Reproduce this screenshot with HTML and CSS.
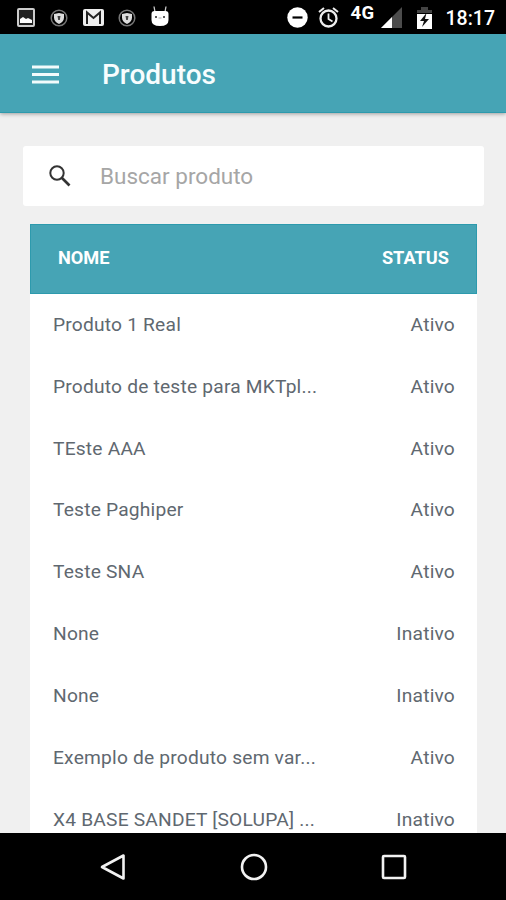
FILE: index.html
```
<!DOCTYPE html>
<html lang="pt-BR">
<head>
    <meta charset="UTF-8">
    <meta name="viewport" content="width=device-width, initial-scale=1.0">
    <title>Produtos</title>
    <link rel="stylesheet" href="styles.css">
</head>
<body>
    <div class="screen">
        <div class="status-bar">
            <div class="notifications">
                <svg width="18" height="19" viewBox="0 0 18 19">
                    <rect x="1" y="1" width="16" height="17" rx="1" fill="#222" stroke="#ccc" stroke-width="2"/>
                    <path d="M3 15v-4l3-2 3 2 2-1 2 1 2 1v3z" fill="#fff"/>
                </svg>
                <svg width="18" height="18" viewBox="0 0 18 18">
                    <circle cx="9" cy="9" r="7.8" fill="none" stroke="#777" stroke-width="1.5"/>
                    <path d="M9 4l5 1v3.500q0 4-5 6.500q-5-2.500-5-6.500V5z" fill="#ddd"/>
                    <path d="M7.500 7h3L9.800 11H8.200z" fill="#444"/>
                </svg>
                <svg width="21" height="17" viewBox="0 0 21 17">
                    <rect width="21" height="17" rx="2" fill="#eee"/>
                    <path d="M4 15V3.500l6.500 5.500L17 3.500V15" fill="none" stroke="#222" stroke-width="2"/>
                </svg>
                <svg width="18" height="18" viewBox="0 0 18 18">
                    <circle cx="9" cy="9" r="7.8" fill="none" stroke="#777" stroke-width="1.5"/>
                    <path d="M9 4l5 1v3.500q0 4-5 6.500q-5-2.500-5-6.500V5z" fill="#ddd"/>
                    <path d="M7.500 7h3L9.800 11H8.200z" fill="#444"/>
                </svg>
                <svg class="android" width="18" height="21" viewBox="0 0 18 21">
                    <path d="M4 6L3 .5M14 6l1-5.500" stroke="#ccc" stroke-width="1.300"/>
                    <path d="M.5 8q0-3 3-3h11q3 0 3 3v6q0 6-8.500 6t-8.500-6z" fill="#fff"/>
                    <circle cx="5" cy="11" r="1" fill="#222"/>
                    <circle cx="13" cy="11" r="1" fill="#222"/>
                    <path d="M7.500 12h3" stroke="#aaa"/>
                </svg>
            </div>
            <div class="system">
                <svg class="dnd" width="21" height="21" viewBox="0 0 21 21">
                    <circle cx="10.500" cy="10.500" r="10.200" fill="#fff"/>
                    <path d="M5.500 10.500h10" stroke="#000" stroke-width="2.200"/>
                </svg>
                <svg class="alarm" width="21" height="21" viewBox="0 0 21 21">
                    <circle cx="10.500" cy="11.500" r="8" fill="none" stroke="#eee" stroke-width="2.300"/>
                    <path d="M1 5l5-4M20 5l-5-4" stroke="#eee" stroke-width="2"/>
                    <path d="M10.500 6.500v5.500l4 2.500" fill="none" stroke="#eee" stroke-width="1.800"/>
                </svg>
                <span class="network">4G</span>
                <svg class="signal" width="21" height="21" viewBox="0 0 21 21">
                    <path d="M0 21L21 0v21z" fill="#4c4c4c"/>
                    <path d="M0 21L11 10v11z" fill="#fff"/>
                </svg>
                <svg class="battery" width="15" height="22" viewBox="0 0 15 22">
                    <path d="M0 6V3h4V0h7v3h4v3z" fill="#444"/>
                    <path d="M0 7h15v15H0z" fill="#fff"/>
                    <path d="M9.500 6L3 14h4l-2 6 7-8H8z" fill="#111"/>
                </svg>
                <span class="clock">18:17</span>
            </div>
        </div>

        <header class="toolbar">
            <svg class="menu-icon" width="27" height="19" viewBox="0 0 27 19">
                <path d="M0 2h27M0 9.500h27M0 17h27" stroke="#f2fbfc" stroke-width="3.200"/>
            </svg>
            <h1>Produtos</h1>
        </header>

        <main class="content">
            <div class="search">
                <svg width="22" height="22" viewBox="0 0 22 22">
                    <circle cx="8" cy="8" r="6.700" fill="none" stroke="#333" stroke-width="2"/>
                    <path d="M12.500 12.500l8 8" stroke="#333" stroke-width="2.700"/>
                </svg>
                <input type="text" placeholder="Buscar produto">
            </div>

            <div class="products">
                <div class="products-head"><span>NOME</span><span>STATUS</span></div>
                <div class="row"><span>Produto 1 Real</span><span>Ativo</span></div>
                <div class="row"><span>Produto de teste para MKTpl...</span><span>Ativo</span></div>
                <div class="row"><span>TEste AAA</span><span>Ativo</span></div>
                <div class="row"><span>Teste Paghiper</span><span>Ativo</span></div>
                <div class="row"><span>Teste SNA</span><span>Ativo</span></div>
                <div class="row"><span>None</span><span>Inativo</span></div>
                <div class="row"><span>None</span><span>Inativo</span></div>
                <div class="row"><span>Exemplo de produto sem var...</span><span>Ativo</span></div>
                <div class="row"><span>X4 BASE SANDET [SOLUPA] ...</span><span>Inativo</span></div>
            </div>
        </main>

        <nav class="nav-bar">
            <svg width="28" height="28" viewBox="0 0 28 28">
                <path d="M24.500 2.500v23L3 14z"/>
            </svg>
            <svg width="28" height="28" viewBox="0 0 28 28">
                <circle cx="14" cy="14" r="12"/>
            </svg>
            <svg width="28" height="28" viewBox="0 0 28 28">
                <rect x="3" y="3" width="22" height="22" rx="1"/>
            </svg>
        </nav>
    </div>
</body>
</html>
```

FILE: styles.css
```
* {
    box-sizing: border-box;
}
body {
    font-family: Roboto, sans-serif;
    margin: 0;
    background-color: #f0f0f0;
}
.screen {
    display: flex;
    flex-direction: column;
    height: 900px;
    overflow: hidden;
}
.status-bar {
    display: flex;
    justify-content: space-between;
    flex: none;
    height: 34px;
    padding: 0 11px 0 17px;
    background: #000;
    color: #fff;
}
.notifications, .system {
    display: flex;
    align-items: center;
    padding-top: 1px;
}
.notifications {
    gap: 15px;
}
.notifications svg:nth-child(4) {
    margin-left: -1px;
}
.notifications .android {
    margin-top: -2px;
}
.alarm {
    margin-left: 10px;
}
.network {
    align-self: flex-start;
    margin: 2px 0 0 11px;
    font-size: 18.5px;
    font-weight: 700;
    line-height: 20px;
    letter-spacing: 0.4px;
}
.signal {
    margin-left: 6px;
}
.battery {
    margin-left: 15px;
}
.clock {
    margin: 2px 0 0 14px;
    font-size: 19.5px;
    font-weight: 500;
}
.toolbar {
    display: flex;
    align-items: center;
    flex: none;
    height: 79px;
    padding: 2px 0 0 32px;
    background: #46a4b5;
    border-bottom: 1px solid #2d9aad;
    box-shadow: 0 1px 4px rgba(0, 0, 0, 0.35);
}
.toolbar h1 {
    margin: 0 0 0 43px;
    color: #f7fdfe;
    font-size: 28px;
    font-weight: 500;
}
.content {
    flex: 1;
    min-height: 0;
    padding: 33px 22px 0 23px;
    overflow: hidden;
}
.search {
    display: flex;
    align-items: center;
    height: 60px;
    padding-left: 26px;
    background: #fff;
    border-radius: 3px;
}
.search input {
    width: 300px;
    margin-left: 29px;
    padding: 0 0 1px;
    border: none;
    outline: none;
    font-family: inherit;
    font-size: 22.5px;
}
.search input::placeholder {
    color: #a6a6a6;
}
.products {
    margin: 18px 7px 0;
    background: #fff;
}
.products-head {
    display: flex;
    justify-content: space-between;
    align-items: center;
    height: 70px;
    padding: 0 27px 4px;
    background: #46a4b5;
    border: 1px solid #2d9aad;
    color: #fff;
    font-size: 18.2px;
    font-weight: 700;
}
.row {
    display: flex;
    justify-content: space-between;
    align-items: center;
    height: 61.85px;
    padding: 0 22px 1px 23px;
    color: #606870;
    font-size: 19.2px;
    letter-spacing: 0.2px;
}
.nav-bar {
    display: flex;
    justify-content: center;
    align-items: center;
    gap: 112.5px;
    flex: none;
    height: 67px;
    padding-left: 1px;
    background: #000;
}
.nav-bar svg {
    fill: none;
    stroke: #f2f2f2;
    stroke-width: 2.6;
    stroke-linejoin: round;
}
```
